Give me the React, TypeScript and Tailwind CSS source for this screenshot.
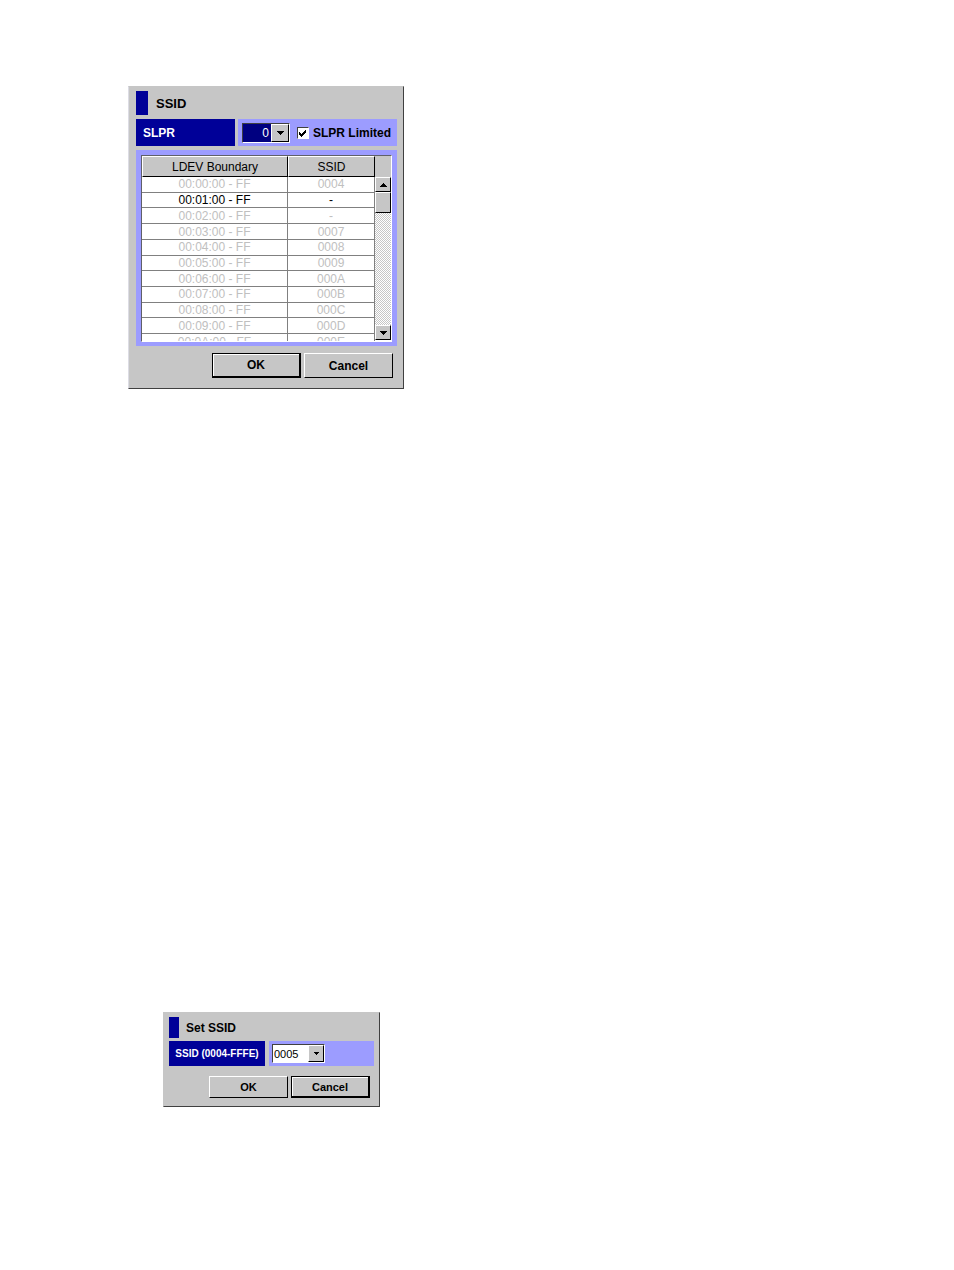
import { useState } from 'react';
import type { ReactNode } from 'react';

interface LdevRow {
  boundary: string;
  ssid: string;
  enabled?: boolean;
}

const rows: LdevRow[] = [
  { boundary: '00:00:00 - FF', ssid: '0004' },
  { boundary: '00:01:00 - FF', ssid: '-', enabled: true },
  { boundary: '00:02:00 - FF', ssid: '-' },
  { boundary: '00:03:00 - FF', ssid: '0007' },
  { boundary: '00:04:00 - FF', ssid: '0008' },
  { boundary: '00:05:00 - FF', ssid: '0009' },
  { boundary: '00:06:00 - FF', ssid: '000A' },
  { boundary: '00:07:00 - FF', ssid: '000B' },
  { boundary: '00:08:00 - FF', ssid: '000C' },
  { boundary: '00:09:00 - FF', ssid: '000D' },
  { boundary: '00:0A:00 - FF', ssid: '000E' },
];

const raised = 'bg-[#c6c6c6] border border-t-white border-l-white border-r-black border-b-black';

function Arrow({ up = false }: { up?: boolean }) {
  return (
    <svg width="7" height="4" viewBox="0 0 7 4" shapeRendering="crispEdges" aria-hidden="true">
      {up ? (
        <path d="M3 0h1v1H3zM2 1h3v1H2zM1 2h5v1H1zM0 3h7v1H0z" fill="#000" />
      ) : (
        <path d="M0 0h7v1H0zM1 1h5v1H1zM2 2h3v1H2zM3 3h1v1H3z" fill="#000" />
      )}
    </svg>
  );
}

function SmallArrow() {
  return (
    <svg width="5" height="3" viewBox="0 0 5 3" shapeRendering="crispEdges" aria-hidden="true">
      <path d="M0 0h5v1H0zM1 1h3v1H1zM2 2h1v1H2z" fill="#000" />
    </svg>
  );
}

function ScrollButton({ up = false }: { up?: boolean }) {
  return (
    <button
      type="button"
      aria-label={up ? 'Scroll up' : 'Scroll down'}
      className={`${raised} flex h-[15px] w-full shrink-0 items-center justify-center`}
    >
      <Arrow up={up} />
    </button>
  );
}

interface DialogButtonProps {
  children: ReactNode;
  primary?: boolean;
  small?: boolean;
}

function DialogButton({ children, primary = false, small = false }: DialogButtonProps) {
  return (
    <button
      type="button"
      className={`bg-[#c6c6c6] font-bold ${
        small ? 'h-[22px] w-[79px] text-[11px]' : 'h-[25px] w-[89px] text-[12px]'
      } ${
        primary
          ? 'border border-r-2 border-b-2 border-black shadow-[inset_1px_1px_0_#fff]'
          : 'border border-t-white border-l-white border-r-black border-b-black'
      }`}
    >
      {children}
    </button>
  );
}

export default function App() {
  const [slpr, setSlpr] = useState('0');
  const [limited, setLimited] = useState(true);
  const [ssid, setSsid] = useState('0005');

  return (
    <main className="flex min-h-screen flex-col items-start bg-white pt-[86px] pb-8 pl-32 font-['Liberation_Sans',Arial,sans-serif] text-[12px] leading-4 text-black">
      {/* SSID dialog */}
      <section
        aria-labelledby="ssid-title"
        className="w-[276px] border border-t-[#c6c6c6] border-r-[#404040] border-b-[#404040] border-l-[#dcdce4] bg-[#c6c6c6] pt-1 pr-[6px] pb-[10px] pl-[7px]"
      >
        <div className="flex h-6 items-center gap-2">
          <span className="h-full w-3 bg-[#000098]" />
          <h1 id="ssid-title" className="pt-[2px] text-[13px] font-bold">SSID</h1>
        </div>

        <div className="mt-1 flex h-[27px] gap-[3px]">
          <label
            htmlFor="slpr"
            className="flex w-[99px] items-center bg-[#000098] pt-px pl-[7px] font-bold text-white"
          >
            SLPR
          </label>
          <div className="flex flex-1 items-center bg-[#9c9cff] pl-1">
            <div className="relative h-5 w-12 border border-t-[#404040] border-r-white border-b-white border-l-[#404040]">
              <select
                id="slpr"
                value={slpr}
                onChange={(e) => setSlpr(e.target.value)}
                className="block h-full w-full appearance-none bg-[#000080] pr-5 text-right text-white [text-align-last:right]"
              >
                <option>0</option>
                <option>1</option>
              </select>
              <span
                className={`${raised} pointer-events-none absolute inset-y-0 right-0 flex w-[18px] items-center justify-center`}
              >
                <Arrow />
              </span>
            </div>
            <label className="ml-[7px] flex items-center font-bold">
              <span className="relative mr-1 block h-3 w-3">
                <input
                  type="checkbox"
                  checked={limited}
                  onChange={(e) => setLimited(e.target.checked)}
                  className="block h-3 w-3 appearance-none border border-t-[#404040] border-r-white border-b-white border-l-[#404040] bg-white"
                />
                {limited && (
                  <svg
                    className="pointer-events-none absolute inset-0"
                    width="12"
                    height="12"
                    viewBox="0 0 12 12"
                    shapeRendering="crispEdges"
                    aria-hidden="true"
                  >
                    <path
                      d="M2 5h1v3H2zM3 6h1v3H3zM4 7h1v3H4zM5 6h1v3H5zM6 5h1v3H6zM7 4h1v3H7zM8 3h1v3H8z"
                      fill="#000"
                    />
                  </svg>
                )}
              </span>
              SLPR Limited
            </label>
          </div>
        </div>

        <div className="mt-1 bg-[#9c9cff] p-[5px] pb-1">
          <div className="flex h-[187px] overflow-hidden border border-t-[#606068] border-r-white border-b-white border-l-[#606068] bg-white">
            <div className="flex-1 overflow-hidden">
              <table className="h-[194px] w-full table-fixed border-separate border-spacing-0 text-center">
                <thead>
                  <tr>
                    <th className={`${raised} h-[21px] w-[146px] p-0 font-normal`}>LDEV Boundary</th>
                    <th className={`${raised} h-[21px] p-0 font-normal`}>SSID</th>
                  </tr>
                </thead>
                <tbody className="leading-[14px]">
                  {rows.map((row) => (
                    <tr key={row.boundary} className={row.enabled ? 'text-black' : 'text-[#c0c0c0]'}>
                      <td className="border-r border-b border-[#808080] p-0">{row.boundary}</td>
                      <td className="border-r border-b border-[#808080] p-0">{row.ssid}</td>
                    </tr>
                  ))}
                </tbody>
              </table>
            </div>
            <div className="flex w-4 flex-col border-b border-white bg-[#c6c6c6] pt-[21px]">
              <ScrollButton up />
              <div className="flex-1 bg-[repeating-conic-gradient(#c6c6c6_0_25%,#fff_0_50%)] bg-[length:2px_2px]">
                <div className={`${raised} h-[21px]`} />
              </div>
              <ScrollButton />
            </div>
          </div>
        </div>

        <div className="mt-[7px] flex justify-end gap-[3px] pr-1">
          <DialogButton primary>OK</DialogButton>
          <DialogButton>Cancel</DialogButton>
        </div>
      </section>

      {/* Set SSID dialog */}
      <section
        aria-labelledby="set-ssid-title"
        className="mt-[623px] ml-[35px] w-[217px] border border-t-[#c6c6c6] border-r-[#404040] border-b-[#404040] border-l-[#c6c6c6] bg-[#c6c6c6] px-[5px] pt-1 pb-2"
      >
        <div className="flex h-[21px] items-center gap-[7px]">
          <span className="h-full w-[10px] bg-[#000098]" />
          <h2 id="set-ssid-title" className="font-bold">Set SSID</h2>
        </div>

        <div className="mt-[3px] flex h-[25px] gap-1">
          <label
            htmlFor="ssid"
            className="flex w-24 items-center justify-center bg-[#000098] text-[10px] font-bold whitespace-nowrap text-white"
          >
            SSID (0004-FFFE)
          </label>
          <div className="flex flex-1 items-center bg-[#9c9cff] pl-[3px]">
            <div className="relative h-[19px] w-[53px] border border-t-[#404040] border-r-white border-b-white border-l-[#404040]">
              <select
                id="ssid"
                value={ssid}
                onChange={(e) => setSsid(e.target.value)}
                className="block h-full w-full appearance-none bg-white pl-px text-[11px]"
              >
                <option>0005</option>
                <option>0006</option>
              </select>
              <span
                className={`${raised} pointer-events-none absolute inset-y-0 right-0 flex w-4 items-center justify-center`}
              >
                <SmallArrow />
              </span>
            </div>
          </div>
        </div>

        <div className="mt-[10px] flex justify-end gap-[3px] pr-1">
          <DialogButton small>OK</DialogButton>
          <DialogButton small primary>Cancel</DialogButton>
        </div>
      </section>
    </main>
  );
}
